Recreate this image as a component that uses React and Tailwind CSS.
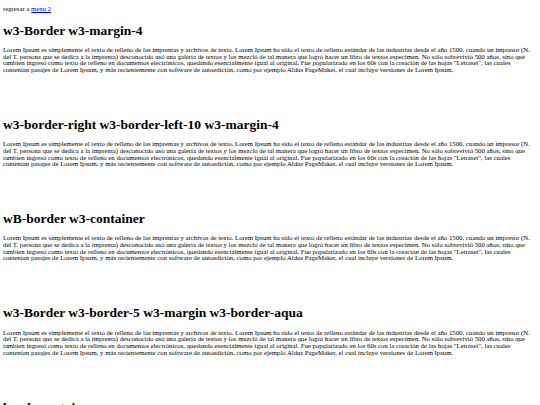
import React from "react";

const lines = [
  "Lorem Ipsum es simplemente el texto de relleno de las imprentas y archivos de texto. Lorem Ipsum ha sido el texto de relleno estándar de las industrias desde el año 1500, cuando un impresor (N.",
  "del T. persona que se dedica a la imprenta) desconocido usó una galería de textos y los mezcló de tal manera que logró hacer un libro de textos especimen. No sólo sobrevivió 500 años, sino que",
  "tambien ingresó como texto de relleno en documentos electrónicos, quedando esencialmente igual al original. Fue popularizado en los 60s con la creación de las hojas \"Letraset\", las cuales",
  "contenian pasajes de Lorem Ipsum, y más recientemente con software de autoedición, como por ejemplo Aldus PageMaker, el cual incluye versiones de Lorem Ipsum.",
];

const sections = [
  "w3-Border w3-margin-4",
  "w3-border-right w3-border-left-10 w3-margin-4",
  "wB-border w3-container",
  "w3-Border w3-border-5 w3-margin w3-border-aqua",
  "borde container",
];

const Section = ({ title }) => (
  <div className="mb-[44.3px]">
    <h1 className="text-[13.5px] leading-[13.3px] font-bold mb-[9.9px]">{title}</h1>
    <p className="whitespace-nowrap">
      {lines.map((l, i) => (
        <React.Fragment key={i}>
          {l}
          {i < lines.length - 1 && <br />}
        </React.Fragment>
      ))}
    </p>
  </div>
);

export default function App() {
  return (
    <div className="bg-white text-black font-['Liberation_Serif',serif] text-[6.75px] leading-[6.67px] px-[3px] pt-[6.1px] overflow-hidden h-[405px]">
      <p>
        regresar a{" "}
        <a href="#" className="text-[#0000ee] underline">
          menu 2
        </a>
      </p>
      <div className="mt-[11.1px]">
        {sections.map((t) => (
          <Section key={t} title={t} />
        ))}
      </div>
    </div>
  );
}
